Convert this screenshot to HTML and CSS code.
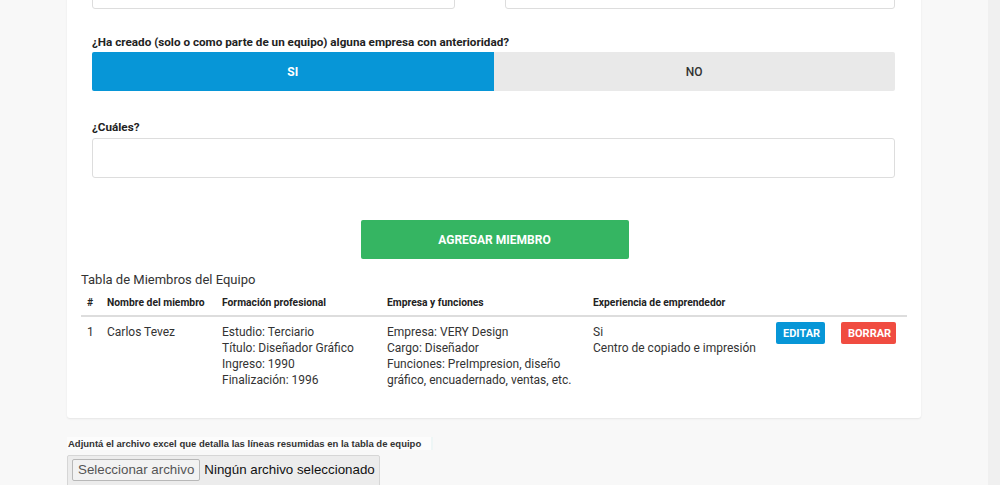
FILE: index.html
```html
<!DOCTYPE html>
<html lang="es">
<head>
<meta charset="utf-8">
<title>Miembros del Equipo</title>
<link rel="stylesheet" href="styles.css">
</head>
<body>
<div class="page">
  <main class="main">
    <section class="card">
      <div class="form">
        <div class="row-two">
          <input class="field" type="text">
          <input class="field" type="text">
        </div>
        <label class="label q1">¿Ha creado (solo o como parte de un equipo) alguna empresa con anterioridad?</label>
        <div class="toggle">
          <button class="opt opt-on">SI</button>
          <button class="opt opt-off">NO</button>
        </div>
        <label class="label q2">¿Cuáles?</label>
        <input class="field field-wide" type="text">
        <div class="add-wrap">
          <button class="btn-add">AGREGAR MIEMBRO</button>
        </div>
      </div>
      <h3 class="table-title">Tabla de Miembros del Equipo</h3>
      <table class="members">
        <colgroup>
          <col class="c1"><col class="c2"><col class="c3"><col class="c4"><col class="c5"><col class="c6">
        </colgroup>
        <thead>
          <tr>
            <th>#</th>
            <th>Nombre del miembro</th>
            <th>Formación profesional</th>
            <th>Empresa y funciones</th>
            <th>Experiencia de emprendedor</th>
            <th></th>
          </tr>
        </thead>
        <tbody>
          <tr>
            <td>1</td>
            <td>Carlos Tevez</td>
            <td>Estudio: Terciario<br>Título: Diseñador Gráfico<br>Ingreso: 1990<br>Finalización: 1996</td>
            <td>Empresa: VERY Design<br>Cargo: Diseñador<br>Funciones: PreImpresion, diseño gráfico, encuadernado, ventas, etc.</td>
            <td>Si<br>Centro de copiado e impresión</td>
            <td class="actions"><button class="btn-sm btn-edit">EDITAR</button><button class="btn-sm btn-del">BORRAR</button></td>
          </tr>
        </tbody>
      </table>
    </section>
    <div class="upload">
      <p class="upload-label"><span>Adjuntá el archivo excel que detalla las líneas resumidas en la tabla de equipo</span></p>
      <div class="file">
        <span class="file-btn">Seleccionar archivo</span>
        <span class="file-name">Ningún archivo seleccionado</span>
      </div>
    </div>
  </main>
  <aside class="rail"></aside>
</div>
</body>
</html>
```
FILE: styles.css
```css
* { box-sizing: border-box; }
html, body { margin: 0; padding: 0; }
body {
  background: #f8f8f8;
  font-family: Roboto, "Liberation Sans", Arial, sans-serif;
  color: #333;
  height: 485px;
  overflow: hidden;
}
.page {
  display: flex;
  height: 485px;
}
.main {
  flex: 1;
  padding-left: 67px;
}
.rail {
  width: 12px;
  background: #f0f0f0;
}
.card {
  width: 854px;
  margin-top: -31px;
  background: #fff;
  border-radius: 0 0 3px 3px;
  box-shadow: 0 1px 2px rgba(0,0,0,0.08);
  padding: 0 14px 24px;
}
.form {
  padding: 0 12px 0 11px;
}
.row-two {
  display: grid;
  grid-template-columns: 363px 1fr;
  gap: 50px;
}
.field {
  display: block;
  width: 100%;
  height: 40px;
  border: 1px solid #ddd;
  border-radius: 3px;
  background: #fff;
  margin: 0;
}
.label {
  display: block;
  font-size: 11.7px;
  font-weight: 700;
  color: #222;
  line-height: 16px;
}
.q1 { margin-top: 25px; }
.toggle {
  display: flex;
  margin-top: 2px;
  height: 39px;
  border-radius: 2px;
  overflow: hidden;
}
.opt {
  flex: 1;
  border: 0;
  margin: 0;
  font-family: Roboto, "Liberation Sans", Arial, sans-serif;
  font-size: 12px;
}
.opt-on {
  background: #0796d7;
  color: #fff;
  font-weight: 700;
}
.opt-off {
  background: #e9e9e9;
  color: #333;
  font-weight: 500;
}
.q2 { margin-top: 28px; }
.field-wide {
  margin-top: 3px;
  height: 40px;
}
.add-wrap {
  display: flex;
  justify-content: center;
  margin-top: 42px;
  padding-left: 2px;
}
.btn-add {
  width: 268px;
  height: 39px;
  border: 0;
  border-radius: 2px;
  background: #35b562;
  color: #fff;
  font-family: Roboto, "Liberation Sans", Arial, sans-serif;
  font-size: 12px;
  font-weight: 700;
}
.table-title {
  margin: 12px 0 0;
  font-size: 13px;
  font-weight: 400;
  line-height: 18px;
  color: #333;
}
.members {
  width: 826px;
  border-collapse: collapse;
  table-layout: fixed;
  margin-top: 1px;
  font-size: 12px;
}
.c1 { width: 20px; }
.c2 { width: 115px; }
.c3 { width: 165px; }
.c4 { width: 206px; }
.c5 { width: 183px; }
.members th {
  text-align: left;
  font-size: 10.3px;
  font-weight: 700;
  color: #222;
  padding: 6px 6px 5px;
  border-bottom: 2px solid #ddd;
  line-height: 14px;
}
.members td {
  vertical-align: top;
  padding: 7px 6px 6px;
  line-height: 16px;
  color: #333;
}
.actions {
  display: flex;
  gap: 16px;
  padding-top: 5px !important;
}
.btn-sm {
  height: 22px;
  border: 0;
  border-radius: 2px;
  color: #fff;
  font-family: Roboto, "Liberation Sans", Arial, sans-serif;
  font-size: 11px;
  font-weight: 700;
  padding: 0 7px;
}
.btn-edit { background: #0796d7; width: 49px; }
.btn-del { background: #f04c41; width: 55px; }
.upload {
  padding-top: 19px;
}
.upload-label {
  margin: 0;
  font-family: "Liberation Sans", Arial, sans-serif;
  font-size: 9.5px;
  font-weight: 700;
  color: #333;
  line-height: 13px;
}
.upload-label span {
  display: inline-block;
  background: #fcfcfc;
  padding: 0 10px 0 1px;
  border-right: 2px solid #eef6f6;
}
.file {
  display: flex;
  align-items: flex-start;
  gap: 4px;
  width: 313px;
  height: 34px;
  margin-top: 5px;
  padding: 3px 4px;
  background: #ececec;
  border: 1px solid #d6d6d6;
  border-radius: 2px;
  font-family: "Liberation Sans", Arial, sans-serif;
  font-size: 13.33px;
}
.file-btn {
  display: inline-block;
  height: 22px;
  line-height: 20px;
  padding: 0 5px;
  color: #555;
  background: #f2f2f2;
  border: 1px solid #b8b8b8;
  border-radius: 2px;
}
.file-name {
  line-height: 22px;
  color: #111;
}
```
